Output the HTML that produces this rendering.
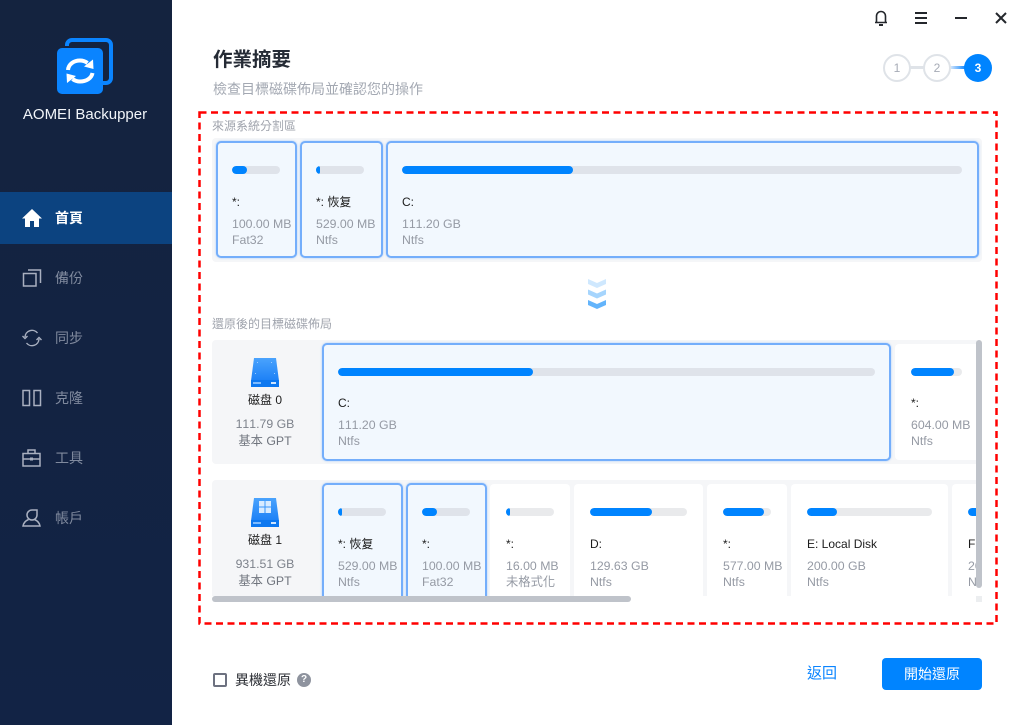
<!DOCTYPE html>
<html><head><meta charset="utf-8"><style>
*{box-sizing:border-box;font-kerning:none}
html,body{margin:0;padding:0;width:1021px;height:725px;overflow:hidden;background:#fff;font-family:"Liberation Sans","Noto Sans CJK TC",sans-serif}
.a{position:absolute}
.t{position:absolute;white-space:nowrap;line-height:16px}
.nav{position:absolute;left:55px;font-size:14px;line-height:18px;color:#808a9e;white-space:nowrap}
.card{position:absolute;background:#fff;border-radius:4px;overflow:hidden}
.sel{background:#f2f8fe;border:2px solid #74aefb;border-radius:5px;box-shadow:0 0 2px #a9ccf9}
.bar{position:absolute;height:8px;border-radius:4px;background:#e9eaec;overflow:hidden}
.sel .bar{background:#dfe3ea}
.bar i{display:block;height:8px;border-radius:4px;background:#0084ff}
.n{position:absolute;font-size:12px;line-height:16px;color:#1c1c1c;white-space:nowrap}
.g{position:absolute;font-size:12.300px;line-height:16px;color:#959aa4;white-space:nowrap}
</style></head><body>
<div class="a" style="left:0;top:0;width:172px;height:725px;background:linear-gradient(#14233f,#122345)"></div>
<div class="a" style="left:0;top:192px;width:172px;height:52px;background:#0c4380"></div>
<svg class="a" style="left:50px;top:30px" width="70" height="70" viewBox="0 0 70 70">
<path d="M17 16v-1a5 5 0 0 1 5-5h34a5 5 0 0 1 5 5v33a5 5 0 0 1-5 5h-3" fill="none" stroke="#0a84ff" stroke-width="4"/>
<rect x="7" y="18" width="46" height="46" rx="5" fill="#0a84ff"/>
<path d="M18 40C18.500 34 24 30.500 30 30.500c3 0 5.500 1 7.500 2.500" fill="none" stroke="#fff" stroke-width="4"/>
<path d="M43 29.500l.5 9.500-9.500-2.500z" fill="#fff"/>
<path d="M42.500 43c-1 5.500-6.500 8.500-12.500 8.500-3 0-5.500-1-7.500-2.500" fill="none" stroke="#fff" stroke-width="4"/>
<path d="M17 53l-.5-9.500 9.500 2.500z" fill="#fff"/>
</svg>
<div class="t" style="left:0;width:170px;text-align:center;top:107px;font-size:15px;color:#f2f5f9">AOMEI Backupper</div>

<svg class="a" style="left:22px;top:209px" width="20" height="18" viewBox="0 0 20 18"><path d="M10 0L0 9.500h3V18h5v-6h4v6h5V9.500h3z" fill="#fff"/></svg>
<div class="nav" style="top:209px;color:#fff;font-weight:bold">首頁</div>
<svg class="a" style="left:22px;top:268px" width="20" height="20" viewBox="0 0 20 20" fill="none" stroke="#a9b0c0" stroke-width="1.500"><rect x="1.500" y="5.500" width="12.500" height="12.500"/><path d="M6 2h12.500v13"/></svg>
<div class="nav" style="top:269px">備份</div>
<svg class="a" style="left:22px;top:329px" width="20" height="18" viewBox="0 0 20 18" fill="none" stroke="#a9b0c0" stroke-width="1.400"><path d="M3 8a7 7 0 0 1 12.500-4M17 10a7 7 0 0 1-12.500 4"/><path d="M0.500 7l2.500 2.500L5.500 7M14.500 11l2.500-2.500 2.500 2.500"/></svg>
<div class="nav" style="top:329px">同步</div>
<svg class="a" style="left:22px;top:389px" width="20" height="18" viewBox="0 0 20 18" fill="none" stroke="#a9b0c0" stroke-width="1.500"><rect x="1" y="1.500" width="6.500" height="15"/><rect x="12" y="1.500" width="6.500" height="15"/></svg>
<div class="nav" style="top:389px">克隆</div>
<svg class="a" style="left:22px;top:449px" width="20" height="18" viewBox="0 0 20 18" fill="none" stroke="#a9b0c0" stroke-width="1.500"><rect x="1" y="4.500" width="17" height="12.500"/><path d="M6 4.500V1h7v3.500M1 10h17"/><rect x="8" y="8.500" width="3" height="3" fill="#a9b0c0" stroke="none"/></svg>
<div class="nav" style="top:449px">工具</div>
<svg class="a" style="left:22px;top:509px" width="20" height="18" viewBox="0 0 20 18" fill="none" stroke="#a9b0c0" stroke-width="1.500"><path d="M10 1h5v5a5 5 0 1 1-10 0 5 5 0 0 1 5-5z"/><path d="M6.500 10.500C3 12 1.500 14 1 17h17c-.5-3-2-5-5.500-6.500"/></svg>
<div class="nav" style="top:509px">帳戶</div>

<svg class="a" style="left:872px;top:9px" width="18" height="18" viewBox="0 0 18 18" fill="none" stroke="#24272c" stroke-width="1.600"><path d="M3 13.500h12M4.500 13.500V7a4.500 4.500 0 0 1 9 0v6.500"/><path d="M7 16h4" stroke-width="2"/></svg>
<svg class="a" style="left:914px;top:11px" width="14" height="14" viewBox="0 0 14 14" stroke="#24272c" stroke-width="2"><path d="M1 2h12M1 7h12M1 12h12"/></svg>
<div class="a" style="left:955px;top:17px;width:12px;height:2px;background:#24272c"></div>
<svg class="a" style="left:994px;top:11px" width="14" height="14" viewBox="0 0 14 14" stroke="#24272c" stroke-width="2"><path d="M2 2l10 10M12 2L2 12"/></svg>

<div class="t" style="left:213px;top:48px;line-height:24px;font-size:19.500px;font-weight:bold;color:#252b35">作業摘要</div>
<div class="t" style="left:213px;top:81px;font-size:14px;color:#a3a8b2">檢查目標磁碟佈局並確認您的操作</div>

<div class="a" style="left:910px;top:66px;width:14px;height:3px;background:#dfe3e8"></div>
<div class="a" style="left:950px;top:66px;width:16px;height:3px;background:linear-gradient(90deg,#dbe9fb,#0a84ff)"></div>
<div class="a" style="left:883px;top:54px;width:28px;height:28px;border-radius:50%;border:2px solid #dfe3e8;background:#fff;text-align:center;font-size:12px;line-height:24px;color:#a6abb6">1</div>
<div class="a" style="left:923px;top:54px;width:28px;height:28px;border-radius:50%;border:2px solid #dfe3e8;background:#fff;text-align:center;font-size:12px;line-height:24px;color:#a6abb6">2</div>
<div class="a" style="left:964px;top:54px;width:28px;height:28px;border-radius:50%;background:#0084ff;text-align:center;font-size:12px;font-weight:bold;line-height:28px;color:#fff">3</div>

<svg class="a" style="left:198px;top:111px" width="800" height="514"><rect x="1.500" y="1.500" width="797" height="511" fill="none" stroke="#f00" stroke-width="2.500" stroke-dasharray="7 4.500"/></svg>

<div class="t" style="left:212px;top:118px;font-size:12px;color:#a0a4ad">來源系統分割區</div>
<div class="a" style="left:212px;top:138px;width:770px;height:124px;background:#f5f6f8;border-radius:4px"></div>

<div class="card sel" style="left:216px;top:141px;width:81px;height:117px"><div class="bar" style="left:14px;top:23px;width:48px"><i style="width:15px"></i></div><div class="n" style="left:14px;top:51px">*:</div><div class="g" style="left:14px;top:73px">100.00 MB</div><div class="g" style="left:14px;top:89px">Fat32</div></div>
<div class="card sel" style="left:300px;top:141px;width:83px;height:117px"><div class="bar" style="left:14px;top:23px;width:48px"><i style="width:4px"></i></div><div class="n" style="left:14px;top:51px">*: 恢复</div><div class="g" style="left:14px;top:73px">529.00 MB</div><div class="g" style="left:14px;top:89px">Ntfs</div></div>
<div class="card sel" style="left:386px;top:141px;width:593px;height:117px"><div class="bar" style="left:14px;top:23px;width:560px"><i style="width:171px"></i></div><div class="n" style="left:14px;top:51px">C:</div><div class="g" style="left:14px;top:73px">111.20 GB</div><div class="g" style="left:14px;top:89px">Ntfs</div></div>

<svg class="a" style="left:587px;top:279px" width="20" height="31" viewBox="0 0 20 31"><path d="M1 0l9 4 9-4v5l-9 4-9-4z" fill="#cfe8fe"/><path d="M1 10.500l9 4 9-4v5l-9 4-9-4z" fill="#a6d5fd"/><path d="M1 21l9 4 9-4v5l-9 4-9-4z" fill="#63b4fb"/></svg>

<div class="t" style="left:212px;top:316px;font-size:12px;color:#a0a4ad">還原後的目標磁碟佈局</div>

<div class="a" style="left:212px;top:340px;width:765px;height:124px;background:#f5f6f8;border-radius:4px 0 0 4px;overflow:hidden">
<div class="card sel" style="left:110px;top:3px;width:569px;height:118px"><div class="bar" style="left:14px;top:23px;width:537px"><i style="width:195px"></i></div><div class="n" style="left:14px;top:50px">C:</div><div class="g" style="left:14px;top:72px">111.20 GB</div><div class="g" style="left:14px;top:88px">Ntfs</div></div>
<div class="card" style="left:683px;top:4px;width:90px;height:116px"><div class="bar" style="left:16px;top:24px;width:51px"><i style="width:43px"></i></div><div class="n" style="left:16px;top:51px">*:</div><div class="g" style="left:16px;top:73px">604.00 MB</div><div class="g" style="left:16px;top:89px">Ntfs</div></div>
</div>
<svg class="a" style="left:250px;top:357px" width="30" height="32" viewBox="0 0 30 32"><defs><linearGradient id="h" x1="0" y1="0" x2="0" y2="1"><stop offset="0" stop-color="#4aa3fd"/><stop offset="1" stop-color="#1c80f6"/></linearGradient></defs><path d="M4 1h22l3 23H1z" fill="url(#h)"/><rect x="1" y="23" width="28" height="7" fill="#0d78f0"/><rect x="21" y="25" width="5" height="2" fill="#cfe6ff"/><rect x="3" y="25" width="8" height="2" fill="#7dbbff"/><path d="M7 5h1v1H7zM21 5h1v1h-1zM5 16h1v1H5zM24 16h1v1h-1z" fill="#9ccbff"/></svg>
<div class="t" style="left:212px;width:106px;text-align:center;top:392px;font-size:12px;color:#1c1c1c">磁盘 0</div>
<div class="g" style="left:212px;width:106px;text-align:center;top:416px;color:#7d828b">111.79 GB</div>
<div class="g" style="left:212px;width:106px;text-align:center;top:433px;color:#6f747d">基本 GPT</div>

<div class="a" style="left:212px;top:480px;width:765px;height:116px;background:#f5f6f8;border-radius:4px 0 0 0;overflow:hidden">
<div class="card sel" style="left:110px;top:3px;width:81px;height:125px"><div class="bar" style="left:14px;top:23px;width:48px"><i style="width:4px"></i></div><div class="n" style="left:14px;top:51px">*: 恢复</div><div class="g" style="left:14px;top:73px">529.00 MB</div><div class="g" style="left:14px;top:89px">Ntfs</div></div>
<div class="card sel" style="left:194px;top:3px;width:81px;height:125px"><div class="bar" style="left:14px;top:23px;width:48px"><i style="width:15px"></i></div><div class="n" style="left:14px;top:51px">*:</div><div class="g" style="left:14px;top:73px">100.00 MB</div><div class="g" style="left:14px;top:89px">Fat32</div></div>
<div class="card" style="left:278px;top:4px;width:80px;height:120px"><div class="bar" style="left:16px;top:24px;width:48px"><i style="width:4px"></i></div><div class="n" style="left:16px;top:52px">*:</div><div class="g" style="left:16px;top:74px">16.00 MB</div><div class="g" style="left:16px;top:90px">未格式化</div></div>
<div class="card" style="left:362px;top:4px;width:129px;height:120px"><div class="bar" style="left:16px;top:24px;width:97px"><i style="width:62px"></i></div><div class="n" style="left:16px;top:52px">D:</div><div class="g" style="left:16px;top:74px">129.63 GB</div><div class="g" style="left:16px;top:90px">Ntfs</div></div>
<div class="card" style="left:495px;top:4px;width:80px;height:120px"><div class="bar" style="left:16px;top:24px;width:48px"><i style="width:41px"></i></div><div class="n" style="left:16px;top:52px">*:</div><div class="g" style="left:16px;top:74px">577.00 MB</div><div class="g" style="left:16px;top:90px">Ntfs</div></div>
<div class="card" style="left:579px;top:4px;width:157px;height:120px"><div class="bar" style="left:16px;top:24px;width:125px"><i style="width:30px"></i></div><div class="n" style="left:16px;top:52px">E: Local Disk</div><div class="g" style="left:16px;top:74px">200.00 GB</div><div class="g" style="left:16px;top:90px">Ntfs</div></div>
<div class="card" style="left:740px;top:4px;width:60px;height:120px"><div class="bar" style="left:16px;top:24px;width:40px"><i style="width:20px"></i></div><div class="n" style="left:16px;top:52px">F:</div><div class="g" style="left:16px;top:74px">200</div><div class="g" style="left:16px;top:90px">Ntfs</div></div>
</div>
<svg class="a" style="left:250px;top:497px" width="30" height="32" viewBox="0 0 30 32"><defs><linearGradient id="h2" x1="0" y1="0" x2="0" y2="1"><stop offset="0" stop-color="#4aa3fd"/><stop offset="1" stop-color="#1c80f6"/></linearGradient></defs><path d="M4 1h22l3 23H1z" fill="url(#h2)"/><rect x="1" y="23" width="28" height="7" fill="#0d78f0"/><rect x="21" y="25" width="5" height="2" fill="#cfe6ff"/><rect x="3" y="25" width="8" height="2" fill="#7dbbff"/><rect x="9" y="4" width="5.500" height="5.500" fill="#d8ebff"/><rect x="15.500" y="4" width="5.500" height="5.500" fill="#d8ebff"/><rect x="9" y="10.500" width="5.500" height="5.500" fill="#d8ebff"/><rect x="15.500" y="10.500" width="5.500" height="5.500" fill="#d8ebff"/></svg>
<div class="t" style="left:212px;width:106px;text-align:center;top:532px;font-size:12px;color:#1c1c1c">磁盘 1</div>
<div class="g" style="left:212px;width:106px;text-align:center;top:556px;color:#7d828b">931.51 GB</div>
<div class="g" style="left:212px;width:106px;text-align:center;top:573px;color:#6f747d">基本 GPT</div>

<div class="a" style="left:976px;top:340px;width:6px;height:248px;background:#bfc3ca;border-radius:3px"></div>
<div class="a" style="left:212px;top:596px;width:419px;height:6px;background:#bfc3ca;border-radius:3px"></div>
<div class="a" style="left:976px;top:596px;width:6px;height:6px;background:#eceef0"></div>

<div class="a" style="left:213px;top:673px;width:14px;height:14px;border:2px solid #6d7180;border-radius:2px"></div>
<div class="t" style="left:235px;top:672px;font-size:14px;color:#2c2f35">異機還原</div>
<div class="a" style="left:297px;top:673px;width:14px;height:14px;border-radius:50%;background:#8e939e;color:#fff;font-size:10px;font-weight:bold;line-height:14px;text-align:center">?</div>

<div class="t" style="left:807px;top:665px;font-size:15px;line-height:18px;color:#0a84ff">返回</div>
<div class="a" style="left:882px;top:658px;width:100px;height:32px;background:#0084ff;border-radius:4px;color:#fff;font-size:14px;line-height:32px;text-align:center">開始還原</div>
</body></html>
